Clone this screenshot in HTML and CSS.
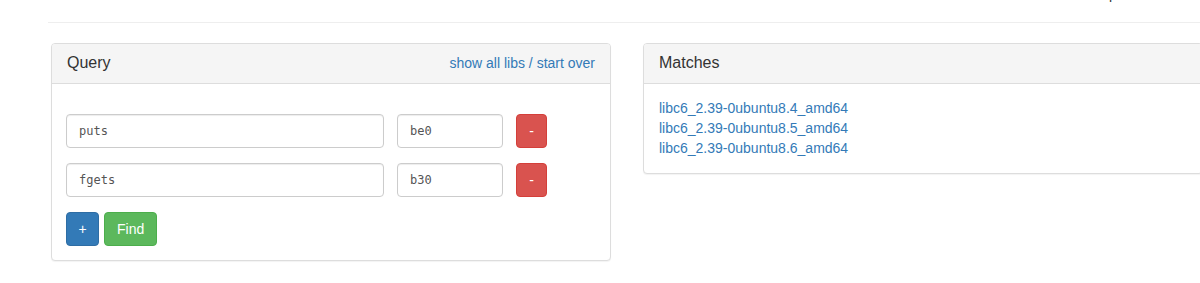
FILE: index.html
```html
<!DOCTYPE html>
<html lang="en">
<head>
<meta charset="utf-8">
<title>libc database search</title>
<link rel="stylesheet" href="styles.css">
</head>
<body>
  <header class="top">
    <nav class="topnav"><a class="toplink" href="#">api</a></nav>
  </header>
  <main class="main">
    <section class="panel panel-query">
      <div class="panel-heading">
        <span class="panel-title">Query</span>
        <span class="heading-links"><a href="#">show all libs</a> / <a href="#">start over</a></span>
      </div>
      <div class="panel-body">
        <div class="qrow">
          <input class="field field-name" type="text" value="puts">
          <input class="field field-addr" type="text" value="be0">
          <button class="btn btn-danger" type="button">-</button>
        </div>
        <div class="qrow">
          <input class="field field-name" type="text" value="fgets">
          <input class="field field-addr" type="text" value="b30">
          <button class="btn btn-danger" type="button">-</button>
        </div>
        <div class="actions">
          <button class="btn btn-primary" type="button">+</button>
          <button class="btn btn-success" type="button">Find</button>
        </div>
      </div>
    </section>
    <section class="panel panel-matches">
      <div class="panel-heading">
        <span class="panel-title">Matches</span>
      </div>
      <div class="panel-body matches-body">
        <a class="match" href="#">libc6_2.39-0ubuntu8.4_amd64</a>
        <a class="match" href="#">libc6_2.39-0ubuntu8.5_amd64</a>
        <a class="match" href="#">libc6_2.39-0ubuntu8.6_amd64</a>
      </div>
    </section>
  </main>
</body>
</html>
```
FILE: styles.css
```css
html, body {
  margin: 0;
  padding: 0;
  background: #fff;
  overflow: hidden;
}
body {
  font-family: "Liberation Sans", Arial, sans-serif;
  font-size: 14px;
  line-height: 20px;
  color: #333;
  width: 1200px;
  height: 283px;
}
a {
  color: #337ab7;
  text-decoration: none;
}
.top {
  margin-left: 48px;
  height: 22px;
  border-bottom: 1px solid #eee;
  display: flex;
  justify-content: flex-end;
  align-items: flex-start;
  overflow: hidden;
}
.topnav {
  margin-top: -13px;
  margin-right: 80px;
  font-size: 14px;
  line-height: 14px;
}
.toplink {
  color: #333;
}
.main {
  display: flex;
  gap: 32px;
  padding-left: 51px;
  margin-top: 20px;
  align-items: flex-start;
}
.panel {
  flex: 0 0 560px;
  box-sizing: border-box;
  border: 1px solid #ddd;
  border-radius: 4px;
  background: #fff;
  box-shadow: 0 1px 1px rgba(0,0,0,0.05);
}
.panel-heading {
  display: flex;
  justify-content: space-between;
  align-items: center;
  box-sizing: border-box;
  height: 40px;
  padding: 9px 15px 10px;
  background: #f5f5f5;
  border-bottom: 1px solid #ddd;
  border-radius: 3px 3px 0 0;
}
.panel-title {
  font-size: 16px;
  line-height: 20px;
  color: #333;
}
.heading-links {
  font-size: 14px;
  color: #337ab7;
}
.panel-body {
  padding: 15px;
}
.panel-query .panel-body {
  padding: 30px 15px 14px 14px;
  display: flex;
  flex-direction: column;
  gap: 15px;
}
.qrow {
  display: flex;
  gap: 13px;
  align-items: center;
}
.field {
  box-sizing: border-box;
  height: 34px;
  padding: 6px 12px;
  font-family: "DejaVu Sans Mono", "Liberation Mono", monospace;
  font-size: 12px;
  color: #555;
  background: #fff;
  border: 1px solid #ccc;
  border-radius: 4px;
  box-shadow: inset 0 1px 1px rgba(0,0,0,0.075);
  outline: none;
}
.field-name {
  width: 318px;
}
.field-addr {
  width: 106px;
}
.btn {
  box-sizing: border-box;
  height: 34px;
  padding: 6px 12px;
  font-family: "Liberation Sans", Arial, sans-serif;
  font-size: 14px;
  line-height: 20px;
  color: #fff;
  border: 1px solid transparent;
  border-radius: 4px;
  cursor: pointer;
}
.btn-danger {
  background: #d9534f;
  border-color: #d43f3a;
  width: 31px;
  padding: 6px 0;
}
.btn-primary {
  background: #337ab7;
  border-color: #2e6da4;
  width: 33px;
  padding: 6px 0;
}
.btn-success {
  background: #5cb85c;
  border-color: #4cae4c;
}
.actions {
  display: flex;
  gap: 5px;
}
.matches-body {
  display: flex;
  flex-direction: column;
  padding-top: 14px;
}
.match {
  line-height: 20px;
}
```
